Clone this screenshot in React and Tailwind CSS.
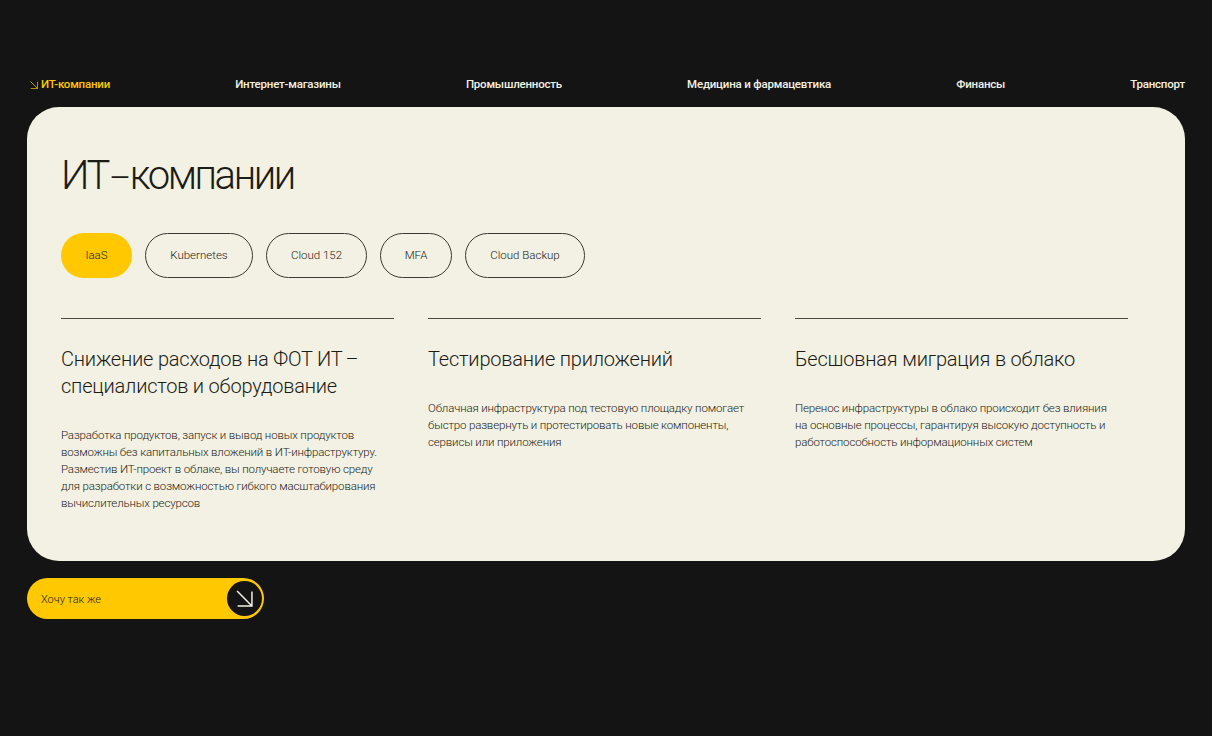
import React from "react";

function Arrow({ className, width = 1.4 }) {
  return (
    <svg viewBox="0 0 16 16" fill="none" stroke="currentColor" className={className}>
      <path d="M1 1 L15 15 M15 1.5 V15 H1.5" strokeWidth={width} />
    </svg>
  );
}

const nav = ["Интернет-магазины", "Промышленность", "Медицина и фармацевтика", "Финансы", "Транспорт"];
const tabs = [
  { t: "Kubernetes", w: "w-[108px]" },
  { t: "Cloud 152", w: "w-[101px]" },
  { t: "MFA", w: "w-[72px]" },
  { t: "Cloud Backup", w: "w-[120px]" },
];
const cols = [
  {
    t: [
      <>
        Снижение расходов на ФОТ ИТ<span className="ml-[3px] mr-[2px]">–</span>
      </>,
      "специалистов и оборудование",
    ],
    d: [
      "Разработка продуктов, запуск и вывод новых продуктов",
      "возможны без капитальных вложений в ИТ-инфраструктуру.",
      "Разместив ИТ-проект в облаке, вы получаете готовую среду",
      "для разработки с возможностью гибкого масштабирования",
      "вычислительных ресурсов",
    ],
  },
  {
    t: ["Тестирование приложений"],
    d: [
      "Облачная инфраструктура под тестовую площадку помогает",
      "быстро развернуть и протестировать новые компоненты,",
      "сервисы или приложения",
    ],
  },
  {
    t: ["Бесшовная миграция в облако"],
    d: [
      "Перенос инфраструктуры в облако происходит без влияния",
      "на основные процессы, гарантируя высокую доступность и",
      "работоспособность информационных систем",
    ],
  },
];

export default function App() {
  return (
    <div className="h-[736px] w-[1212px] overflow-hidden bg-[#141414] pl-[27px] pr-[27px] pt-[77px] font-['Roboto',sans-serif] antialiased">
      <nav className="flex h-[30px] items-start justify-between pl-[3px] text-[11.5px] font-medium leading-[15px] tracking-[-0.2px] text-[#f3f1e3]">
        <span className="flex items-center gap-[3px] text-[#ffc800]">
          <Arrow className="h-[8px] w-[8px]" />
          ИТ-компании
        </span>
        {nav.map((n) => (
          <span key={n}>{n}</span>
        ))}
      </nav>
      <section className="h-[454px] rounded-[32px] bg-[#f3f1e3] pl-[34px] pt-[41px] text-[#1c1c16]">
        <h1 className="h-[56px] text-[40px] font-light leading-[56px] tracking-[-2.4px]">
          ИТ<span className="mx-[1px] text-[34px]">–</span>компании
        </h1>
        <div className="mt-[29px] flex gap-[13px] text-[11.5px] font-light leading-[15px]">
          <span className="flex h-[45px] w-[71px] items-center justify-center rounded-[23px] bg-[#ffc800]">IaaS</span>
          {tabs.map(({ t, w }) => (
            <span key={t} className={`flex h-[45px] items-center justify-center rounded-[23px] border border-[#3a3a34] ${w}`}>
              {t}
            </span>
          ))}
        </div>
        <div className="mt-[40px] grid w-[1067px] grid-cols-3 gap-[34px]">
          {cols.map((c, i) => (
            <div key={i} className="border-t border-[#4a4a42] pt-[27px]">
              <h2 className="text-[20px] font-light leading-[27px] tracking-[-0.2px]">
                {c.t.map((l, j) => (
                  <div key={j} className="whitespace-nowrap">{l}</div>
                ))}
              </h2>
              <p className="mt-[27px] text-[11.5px] font-light leading-[17px] tracking-[-0.15px] text-[#1c1c16]">
                {c.d.map((l) => (
                  <span key={l} className="block whitespace-nowrap">{l}</span>
                ))}
              </p>
            </div>
          ))}
        </div>
      </section>
      <button className="mt-[17px] flex h-[41px] w-[237px] items-center justify-between rounded-full bg-[#ffc800] pl-[14px] pr-[2px] text-[11px] font-light text-[#1c1c16]">
        <span className="pt-[3px]">Хочу так же</span>
        <span className="flex h-[35px] w-[35px] items-center justify-center rounded-full bg-[#141414] text-[#f3f1e3]">
          <Arrow className="h-[17px] w-[17px]" />
        </span>
      </button>
    </div>
  );
}
